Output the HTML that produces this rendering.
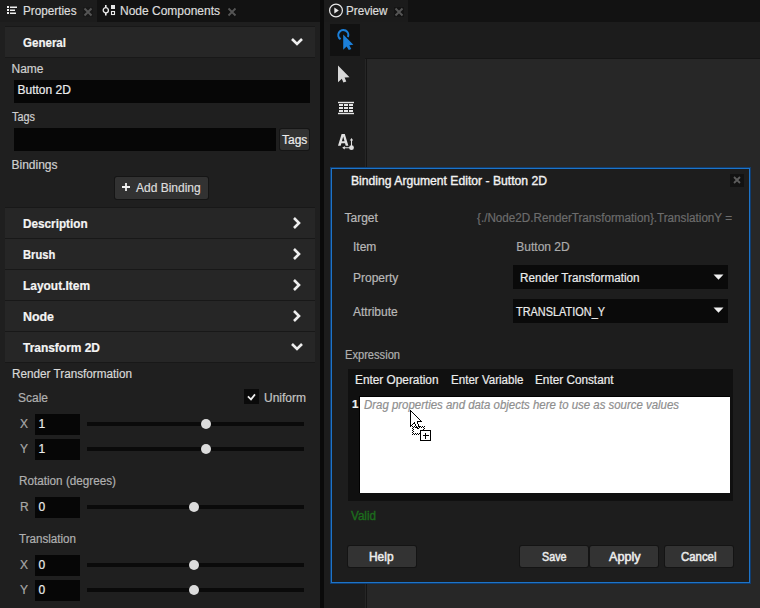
<!DOCTYPE html>
<html><head><meta charset="utf-8"><style>
html,body{margin:0;padding:0;width:760px;height:608px;overflow:hidden;background:#161616;}
body{position:relative;font-family:"Liberation Sans",sans-serif;}
body>div,body>svg{position:absolute;}
.t{white-space:nowrap;-webkit-text-stroke:0.2px currentColor;}
</style></head><body>
<div style="left:0px;top:0px;width:760px;height:22px;background:#121212;"></div>
<div style="left:0px;top:22px;width:320px;height:586px;background:#1f1f1f;"></div>
<div style="left:0px;top:0px;width:97px;height:22px;background:#1c1c1c;"></div>
<div style="left:320px;top:0px;width:4px;height:608px;background:#0a0a0a;"></div>
<div style="left:324px;top:22px;width:436px;height:586px;background:#1c1c1c;"></div>
<div style="left:324px;top:0px;width:84px;height:22px;background:#1b1b1b;"></div>
<div style="left:365px;top:58px;width:395px;height:550px;background:#151515;"></div>
<div style="left:365px;top:59px;width:1px;height:549px;background:#262626;"></div>
<div style="left:367px;top:59px;width:393px;height:549px;background:#272727;"></div>
<svg style="left:7px;top:6px" width="11" height="9"><g fill="#f0f0f0"><rect x="0" y="0" width="2" height="2"/><rect x="0" y="3" width="2" height="2"/><rect x="0" y="6" width="2" height="2"/><rect x="3" y="0.5" width="7" height="1.5"/><rect x="3" y="3.5" width="5" height="1.5"/><rect x="3" y="6.5" width="6" height="1.5"/></g></svg>
<div class="t" style="left:22.5px;top:5.00px;font-size:12px;line-height:12px;color:#dcdcdc;transform:scaleX(0.9782);transform-origin:0 0;">Properties</div>
<svg style="left:83px;top:7px" width="10" height="10"><rect width="10" height="10" fill="#181818"/><path d="M1.5 1.5L8.5 8.5M8.5 1.5L1.5 8.5" stroke="#555555" stroke-width="1.9"/></svg>
<svg style="left:102px;top:4px" width="15" height="13"><circle cx="3.8" cy="6.2" r="2.6" fill="none" stroke="#ececec" stroke-width="1.3"/><path d="M3.8 1V3.6M3.8 8.8V11.5" stroke="#ececec" stroke-width="1.6"/><rect x="9" y="1" width="4" height="4" fill="#e4e4e4"/><rect x="9.5" y="7.5" width="3" height="3" fill="none" stroke="#ececec" stroke-width="1.1"/></svg>
<div class="t" style="left:119.5px;top:5.00px;font-size:12px;line-height:12px;color:#dcdcdc;transform:scaleX(0.9994);transform-origin:0 0;">Node Components</div>
<svg style="left:227px;top:7px" width="10" height="10"><rect width="10" height="10" fill="#111111"/><path d="M1.5 1.5L8.5 8.5M8.5 1.5L1.5 8.5" stroke="#555555" stroke-width="1.9"/></svg>
<svg style="left:328px;top:2px" width="16" height="16"><circle cx="8" cy="8.5" r="6.4" fill="none" stroke="#e8e8e8" stroke-width="1.2"/><path d="M6.3 5.6L10.8 8.5L6.3 11.4Z" fill="#e8e8e8"/></svg>
<div class="t" style="left:345.5px;top:5.00px;font-size:12px;line-height:12px;color:#dcdcdc;transform:scaleX(0.9724);transform-origin:0 0;">Preview</div>
<svg style="left:394px;top:7px" width="10" height="10"><rect width="10" height="10" fill="#141414"/><path d="M1.5 1.5L8.5 8.5M8.5 1.5L1.5 8.5" stroke="#555555" stroke-width="1.9"/></svg>
<div style="left:5px;top:26px;width:310px;height:32px;background:#181818;"></div>
<div style="left:5px;top:27px;width:310px;height:30px;background:#262626;"></div>
<div class="t" style="left:23px;top:37.00px;font-size:12px;line-height:12px;color:#f4f4f4;font-weight:bold;transform:scaleX(0.9622);transform-origin:0 0;">General</div>
<svg style="left:290px;top:36px" width="14" height="12"><path d="M2 3L7 8L12 3" fill="none" stroke="#eeeeee" stroke-width="2.6"/></svg>
<div class="t" style="left:11.5px;top:63.00px;font-size:12px;line-height:12px;color:#cfcfcf;">Name</div>
<div style="left:14px;top:80px;width:296px;height:23px;background:#060606;"></div>
<div class="t" style="left:17.5px;top:84.00px;font-size:12px;line-height:12px;color:#ececec;">Button 2D</div>
<div class="t" style="left:11.5px;top:111.00px;font-size:12px;line-height:12px;color:#cfcfcf;transform:scaleX(0.9074);transform-origin:0 0;">Tags</div>
<div style="left:14px;top:128px;width:262px;height:23px;background:#060606;"></div>
<div style="left:280px;top:129px;width:29px;height:21px;background:#323232;border-radius:2px;box-shadow:0 0 0 1px #151515;"></div>
<div class="t" style="left:282px;top:134.00px;font-size:12px;line-height:12px;color:#ececec;">Tags</div>
<div class="t" style="left:11.5px;top:159.00px;font-size:12px;line-height:12px;color:#cfcfcf;">Bindings</div>
<div style="left:115px;top:177px;width:93px;height:22px;background:#323232;border-radius:2px;box-shadow:0 0 0 1px #151515;"></div>
<svg style="left:121px;top:182px" width="10" height="10"><path d="M5 1V9M1 5H9" stroke="#f0f0f0" stroke-width="1.8"/></svg>
<div class="t" style="left:136px;top:182.00px;font-size:12px;line-height:12px;color:#dddddd;">Add Binding</div>
<div style="left:5px;top:207px;width:310px;height:32px;background:#181818;"></div>
<div style="left:5px;top:208px;width:310px;height:30px;background:#262626;"></div>
<div class="t" style="left:23px;top:218.00px;font-size:12px;line-height:12px;color:#f4f4f4;font-weight:bold;transform:scaleX(0.9786);transform-origin:0 0;">Description</div>
<svg style="left:291px;top:216px" width="12" height="14"><path d="M3 2L8 7L3 12" fill="none" stroke="#eeeeee" stroke-width="2.6"/></svg>
<div style="left:5px;top:238px;width:310px;height:32px;background:#181818;"></div>
<div style="left:5px;top:239px;width:310px;height:30px;background:#262626;"></div>
<div class="t" style="left:23px;top:249.00px;font-size:12px;line-height:12px;color:#f4f4f4;font-weight:bold;transform:scaleX(0.9288);transform-origin:0 0;">Brush</div>
<svg style="left:291px;top:247px" width="12" height="14"><path d="M3 2L8 7L3 12" fill="none" stroke="#eeeeee" stroke-width="2.6"/></svg>
<div style="left:5px;top:269px;width:310px;height:32px;background:#181818;"></div>
<div style="left:5px;top:270px;width:310px;height:30px;background:#262626;"></div>
<div class="t" style="left:23px;top:280.00px;font-size:12px;line-height:12px;color:#f4f4f4;font-weight:bold;transform:scaleX(0.9949);transform-origin:0 0;">Layout.Item</div>
<svg style="left:291px;top:278px" width="12" height="14"><path d="M3 2L8 7L3 12" fill="none" stroke="#eeeeee" stroke-width="2.6"/></svg>
<div style="left:5px;top:300px;width:310px;height:32px;background:#181818;"></div>
<div style="left:5px;top:301px;width:310px;height:30px;background:#262626;"></div>
<div class="t" style="left:23px;top:311.00px;font-size:12px;line-height:12px;color:#f4f4f4;font-weight:bold;transform:scaleX(1.0334);transform-origin:0 0;">Node</div>
<svg style="left:291px;top:309px" width="12" height="14"><path d="M3 2L8 7L3 12" fill="none" stroke="#eeeeee" stroke-width="2.6"/></svg>
<div style="left:5px;top:331px;width:310px;height:32px;background:#181818;"></div>
<div style="left:5px;top:332px;width:310px;height:30px;background:#262626;"></div>
<div class="t" style="left:23px;top:342.00px;font-size:12px;line-height:12px;color:#f4f4f4;font-weight:bold;transform:scaleX(0.9954);transform-origin:0 0;">Transform 2D</div>
<svg style="left:290px;top:341px" width="14" height="12"><path d="M2 3L7 8L12 3" fill="none" stroke="#eeeeee" stroke-width="2.6"/></svg>
<div class="t" style="left:11.5px;top:368.00px;font-size:12px;line-height:12px;color:#d8d8d8;transform:scaleX(0.9778);transform-origin:0 0;">Render Transformation</div>
<div class="t" style="left:18px;top:392.00px;font-size:12px;line-height:12px;color:#b0b0b0;">Scale</div>
<div style="left:244px;top:389px;width:15px;height:15px;background:#0a0a0a;"></div>
<svg style="left:244px;top:389px" width="15" height="15"><path d="M3.9 7.4L7 10.4L11 5.4" fill="none" stroke="#eeeeee" stroke-width="1.7"/></svg>
<div class="t" style="left:264px;top:392.00px;font-size:12px;line-height:12px;color:#c4c4c4;">Uniform</div>
<div class="t" style="left:20px;top:418.00px;font-size:12px;line-height:12px;color:#a8a8a8;">X</div>
<div style="left:35px;top:414px;width:45px;height:21px;background:#060606;"></div>
<div class="t" style="left:38.5px;top:418.00px;font-size:12px;line-height:12px;color:#ececec;">1</div>
<div style="left:87px;top:422px;width:217px;height:4px;background:#0a0a0a;"></div>
<div style="left:200.5px;top:419px;width:10px;height:10px;border-radius:50%;background:#dcdcdc"></div>
<div class="t" style="left:20px;top:443.00px;font-size:12px;line-height:12px;color:#a8a8a8;">Y</div>
<div style="left:35px;top:439px;width:45px;height:21px;background:#060606;"></div>
<div class="t" style="left:38.5px;top:443.00px;font-size:12px;line-height:12px;color:#ececec;">1</div>
<div style="left:87px;top:447px;width:217px;height:4px;background:#0a0a0a;"></div>
<div style="left:200.5px;top:444px;width:10px;height:10px;border-radius:50%;background:#dcdcdc"></div>
<div class="t" style="left:18.5px;top:475.00px;font-size:12px;line-height:12px;color:#b0b0b0;transform:scaleX(0.9760);transform-origin:0 0;">Rotation (degrees)</div>
<div class="t" style="left:20px;top:501.00px;font-size:12px;line-height:12px;color:#a8a8a8;">R</div>
<div style="left:35px;top:497px;width:45px;height:21px;background:#060606;"></div>
<div class="t" style="left:38.5px;top:501.00px;font-size:12px;line-height:12px;color:#ececec;">0</div>
<div style="left:87px;top:505px;width:217px;height:4px;background:#0a0a0a;"></div>
<div style="left:189px;top:502px;width:10px;height:10px;border-radius:50%;background:#dcdcdc"></div>
<div class="t" style="left:18.5px;top:533.00px;font-size:12px;line-height:12px;color:#b0b0b0;transform:scaleX(0.9675);transform-origin:0 0;">Translation</div>
<div class="t" style="left:20px;top:559.00px;font-size:12px;line-height:12px;color:#a8a8a8;">X</div>
<div style="left:35px;top:555px;width:45px;height:21px;background:#060606;"></div>
<div class="t" style="left:38.5px;top:559.00px;font-size:12px;line-height:12px;color:#ececec;">0</div>
<div style="left:87px;top:563px;width:217px;height:4px;background:#0a0a0a;"></div>
<div style="left:189px;top:560px;width:10px;height:10px;border-radius:50%;background:#dcdcdc"></div>
<div class="t" style="left:20px;top:584.00px;font-size:12px;line-height:12px;color:#a8a8a8;">Y</div>
<div style="left:35px;top:580px;width:45px;height:21px;background:#060606;"></div>
<div class="t" style="left:38.5px;top:584.00px;font-size:12px;line-height:12px;color:#ececec;">0</div>
<div style="left:87px;top:588px;width:217px;height:4px;background:#0a0a0a;"></div>
<div style="left:189px;top:585px;width:10px;height:10px;border-radius:50%;background:#dcdcdc"></div>
<div style="left:330px;top:24px;width:30px;height:32px;background:#111111;"></div>
<svg style="left:0px;top:0px" width="760" height="160"><path d="M340.6 39.2A5 5 0 1 1 347.9 37" fill="none" stroke="#1b7fd9" stroke-width="2.1"/><path d="M343.2 34.5L353.4 44.8L349.3 45.2L351.3 49L348.8 50L346.6 46.4L343.2 49.7Z" fill="#1b7fd9" stroke="#111" stroke-width="0.8" paint-order="stroke"/><path d="M338 65.6L349.5 77.2L344.6 77.6L346.3 81.6L343.4 82.6L341.8 78.8L338 82.2Z" fill="#d8d8d8"/><g fill="#e6e6e6"><rect x="338" y="101.8" width="16" height="1.4"/><rect x="338" y="112.8" width="16" height="1.4"/><rect x="339" y="104" width="4" height="2"/><rect x="344" y="104" width="4" height="2"/><rect x="349" y="104" width="4" height="2"/><rect x="339" y="107" width="4" height="2"/><rect x="344" y="107" width="4" height="2"/><rect x="349" y="107" width="4" height="2"/><rect x="339" y="110" width="4" height="2"/><rect x="344" y="110" width="4" height="2"/><rect x="349" y="110" width="4" height="2"/></g><path fill="#e0e0e0" fill-rule="evenodd" d="M338 145.7L341.6 134L344.8 134L348.4 145.7L345.7 145.7L345 143.3L341.4 143.3L340.7 145.7Z M341.9 141.2L344.5 141.2L343.2 136.6Z"/><path d="M351.5 147V140M343.5 147.7H351" stroke="#e0e0e0" stroke-width="1.1" fill="none"/><path d="M349.8 140.6L351.5 138L353.2 140.6Z M342.2 147.7L344.8 146L344.8 149.4Z" fill="#e0e0e0"/><circle cx="351.5" cy="147.7" r="2.4" fill="#e0e0e0"/></svg>
<div style="left:331px;top:168px;width:419px;height:415px;background:#1d1d1d;box-sizing:border-box;border:1px solid #1e74c8;box-shadow:0 0 0 1px #0f3d70;"></div>
<div class="t" style="left:350.5px;top:175.00px;font-size:12px;line-height:12px;color:#f2f2f2;transform:scaleX(1.0132);transform-origin:0 0;-webkit-text-stroke:0.35px #f2f2f2;">Binding Argument Editor - Button 2D</div>
<div style="left:730px;top:174px;width:14px;height:13px;background:#121212;"></div>
<svg style="left:732px;top:175px" width="10" height="10"><path d="M2 2L8 8M8 2L2 8" stroke="#5c5c5c" stroke-width="1.8"/></svg>
<div class="t" style="left:344.5px;top:212.00px;font-size:12px;line-height:12px;color:#b8b8b8;">Target</div>
<div class="t" style="left:477px;top:212.00px;font-size:12px;line-height:12px;color:#6c6c6c;transform:scaleX(0.9732);transform-origin:0 0;">{./Node2D.RenderTransformation}.TranslationY =</div>
<div class="t" style="left:353px;top:241.00px;font-size:12px;line-height:12px;color:#b8b8b8;">Item</div>
<div class="t" style="left:516.3px;top:241.00px;font-size:12px;line-height:12px;color:#ababab;">Button 2D</div>
<div class="t" style="left:353px;top:272.00px;font-size:12px;line-height:12px;color:#b8b8b8;">Property</div>
<div style="left:513px;top:265px;width:215px;height:24px;background:#0a0a0a;"></div>
<div class="t" style="left:519.5px;top:272.00px;font-size:12px;line-height:12px;color:#ececec;transform:scaleX(0.9737);transform-origin:0 0;">Render Transformation</div>
<svg style="left:713px;top:274px" width="12" height="7"><path d="M0.5 0.5H10.5L5.5 5.8Z" fill="#f0f0f0"/></svg>
<div class="t" style="left:353px;top:306.00px;font-size:12px;line-height:12px;color:#b8b8b8;">Attribute</div>
<div style="left:513px;top:299px;width:215px;height:24px;background:#0a0a0a;"></div>
<div class="t" style="left:516.4px;top:306.00px;font-size:12px;line-height:12px;color:#ececec;transform:scaleX(0.9100);transform-origin:0 0;">TRANSLATION_Y</div>
<svg style="left:713px;top:307px" width="12" height="7"><path d="M0.5 0.5H10.5L5.5 5.8Z" fill="#f0f0f0"/></svg>
<div class="t" style="left:344.6px;top:349.00px;font-size:12px;line-height:12px;color:#b0b0b0;transform:scaleX(0.9265);transform-origin:0 0;">Expression</div>
<div style="left:348px;top:369px;width:385px;height:132px;background:#101010;"></div>
<div class="t" style="left:354.5px;top:374.00px;font-size:12px;line-height:12px;color:#ececec;transform:scaleX(0.9857);transform-origin:0 0;">Enter Operation</div>
<div class="t" style="left:450.5px;top:374.00px;font-size:12px;line-height:12px;color:#ececec;transform:scaleX(0.9647);transform-origin:0 0;">Enter Variable</div>
<div class="t" style="left:535px;top:374.00px;font-size:12px;line-height:12px;color:#ececec;transform:scaleX(0.9807);transform-origin:0 0;">Enter Constant</div>
<div style="left:359px;top:396px;width:371px;height:97px;background:#000000;"></div>
<div style="left:360px;top:397px;width:370px;height:96px;background:#ffffff;"></div>
<div class="t" style="left:352px;top:399.00px;font-size:11.5px;line-height:11.5px;color:#f0f0f0;font-weight:bold;">1</div>
<div class="t" style="left:363.5px;top:399.00px;font-size:12px;line-height:12px;color:#8e8e8e;font-style:italic;transform:scaleX(0.9521);transform-origin:0 0;">Drag properties and data objects here to use as source values</div>
<svg style="left:410px;top:410px" width="24" height="34" shape-rendering="crispEdges"><rect x="0" y="0" width="1" height="1" fill="#000"/><rect x="0" y="1" width="1" height="1" fill="#000"/><rect x="1" y="1" width="1" height="1" fill="#000"/><rect x="0" y="2" width="1" height="1" fill="#000"/><rect x="1" y="2" width="1" height="1" fill="#fff"/><rect x="2" y="2" width="1" height="1" fill="#000"/><rect x="0" y="3" width="1" height="1" fill="#000"/><rect x="1" y="3" width="1" height="1" fill="#fff"/><rect x="2" y="3" width="1" height="1" fill="#fff"/><rect x="3" y="3" width="1" height="1" fill="#000"/><rect x="0" y="4" width="1" height="1" fill="#000"/><rect x="1" y="4" width="1" height="1" fill="#fff"/><rect x="2" y="4" width="1" height="1" fill="#fff"/><rect x="3" y="4" width="1" height="1" fill="#fff"/><rect x="4" y="4" width="1" height="1" fill="#000"/><rect x="0" y="5" width="1" height="1" fill="#000"/><rect x="1" y="5" width="1" height="1" fill="#fff"/><rect x="2" y="5" width="1" height="1" fill="#fff"/><rect x="3" y="5" width="1" height="1" fill="#fff"/><rect x="4" y="5" width="1" height="1" fill="#fff"/><rect x="5" y="5" width="1" height="1" fill="#000"/><rect x="0" y="6" width="1" height="1" fill="#000"/><rect x="1" y="6" width="1" height="1" fill="#fff"/><rect x="2" y="6" width="1" height="1" fill="#fff"/><rect x="3" y="6" width="1" height="1" fill="#fff"/><rect x="4" y="6" width="1" height="1" fill="#fff"/><rect x="5" y="6" width="1" height="1" fill="#fff"/><rect x="6" y="6" width="1" height="1" fill="#000"/><rect x="0" y="7" width="1" height="1" fill="#000"/><rect x="1" y="7" width="1" height="1" fill="#fff"/><rect x="2" y="7" width="1" height="1" fill="#fff"/><rect x="3" y="7" width="1" height="1" fill="#fff"/><rect x="4" y="7" width="1" height="1" fill="#fff"/><rect x="5" y="7" width="1" height="1" fill="#fff"/><rect x="6" y="7" width="1" height="1" fill="#fff"/><rect x="7" y="7" width="1" height="1" fill="#000"/><rect x="0" y="8" width="1" height="1" fill="#000"/><rect x="1" y="8" width="1" height="1" fill="#fff"/><rect x="2" y="8" width="1" height="1" fill="#fff"/><rect x="3" y="8" width="1" height="1" fill="#fff"/><rect x="4" y="8" width="1" height="1" fill="#fff"/><rect x="5" y="8" width="1" height="1" fill="#fff"/><rect x="6" y="8" width="1" height="1" fill="#fff"/><rect x="7" y="8" width="1" height="1" fill="#fff"/><rect x="8" y="8" width="1" height="1" fill="#000"/><rect x="0" y="9" width="1" height="1" fill="#000"/><rect x="1" y="9" width="1" height="1" fill="#fff"/><rect x="2" y="9" width="1" height="1" fill="#fff"/><rect x="3" y="9" width="1" height="1" fill="#fff"/><rect x="4" y="9" width="1" height="1" fill="#fff"/><rect x="5" y="9" width="1" height="1" fill="#fff"/><rect x="6" y="9" width="1" height="1" fill="#fff"/><rect x="7" y="9" width="1" height="1" fill="#fff"/><rect x="8" y="9" width="1" height="1" fill="#fff"/><rect x="9" y="9" width="1" height="1" fill="#000"/><rect x="0" y="10" width="1" height="1" fill="#000"/><rect x="1" y="10" width="1" height="1" fill="#fff"/><rect x="2" y="10" width="1" height="1" fill="#fff"/><rect x="3" y="10" width="1" height="1" fill="#fff"/><rect x="4" y="10" width="1" height="1" fill="#fff"/><rect x="5" y="10" width="1" height="1" fill="#fff"/><rect x="6" y="10" width="1" height="1" fill="#fff"/><rect x="7" y="10" width="1" height="1" fill="#fff"/><rect x="8" y="10" width="1" height="1" fill="#fff"/><rect x="9" y="10" width="1" height="1" fill="#fff"/><rect x="10" y="10" width="1" height="1" fill="#000"/><rect x="0" y="11" width="1" height="1" fill="#000"/><rect x="1" y="11" width="1" height="1" fill="#fff"/><rect x="2" y="11" width="1" height="1" fill="#fff"/><rect x="3" y="11" width="1" height="1" fill="#fff"/><rect x="4" y="11" width="1" height="1" fill="#fff"/><rect x="5" y="11" width="1" height="1" fill="#fff"/><rect x="6" y="11" width="1" height="1" fill="#fff"/><rect x="7" y="11" width="1" height="1" fill="#000"/><rect x="8" y="11" width="1" height="1" fill="#000"/><rect x="9" y="11" width="1" height="1" fill="#000"/><rect x="10" y="11" width="1" height="1" fill="#000"/><rect x="11" y="11" width="1" height="1" fill="#000"/><rect x="0" y="12" width="1" height="1" fill="#000"/><rect x="1" y="12" width="1" height="1" fill="#fff"/><rect x="2" y="12" width="1" height="1" fill="#fff"/><rect x="3" y="12" width="1" height="1" fill="#fff"/><rect x="4" y="12" width="1" height="1" fill="#000"/><rect x="5" y="12" width="1" height="1" fill="#fff"/><rect x="6" y="12" width="1" height="1" fill="#fff"/><rect x="7" y="12" width="1" height="1" fill="#000"/><rect x="0" y="13" width="1" height="1" fill="#000"/><rect x="1" y="13" width="1" height="1" fill="#fff"/><rect x="2" y="13" width="1" height="1" fill="#fff"/><rect x="3" y="13" width="1" height="1" fill="#000"/><rect x="4" y="13" width="1" height="1" fill="#000"/><rect x="5" y="13" width="1" height="1" fill="#fff"/><rect x="6" y="13" width="1" height="1" fill="#fff"/><rect x="7" y="13" width="1" height="1" fill="#000"/><rect x="0" y="14" width="1" height="1" fill="#000"/><rect x="1" y="14" width="1" height="1" fill="#fff"/><rect x="2" y="14" width="1" height="1" fill="#000"/><rect x="5" y="14" width="1" height="1" fill="#000"/><rect x="6" y="14" width="1" height="1" fill="#fff"/><rect x="7" y="14" width="1" height="1" fill="#fff"/><rect x="8" y="14" width="1" height="1" fill="#000"/><rect x="0" y="15" width="1" height="1" fill="#000"/><rect x="1" y="15" width="1" height="1" fill="#000"/><rect x="5" y="15" width="1" height="1" fill="#000"/><rect x="6" y="15" width="1" height="1" fill="#fff"/><rect x="7" y="15" width="1" height="1" fill="#fff"/><rect x="8" y="15" width="1" height="1" fill="#000"/><rect x="0" y="16" width="1" height="1" fill="#000"/><rect x="6" y="16" width="1" height="1" fill="#000"/><rect x="7" y="16" width="1" height="1" fill="#fff"/><rect x="8" y="16" width="1" height="1" fill="#fff"/><rect x="9" y="16" width="1" height="1" fill="#000"/><rect x="6" y="17" width="1" height="1" fill="#000"/><rect x="7" y="17" width="1" height="1" fill="#fff"/><rect x="8" y="17" width="1" height="1" fill="#fff"/><rect x="9" y="17" width="1" height="1" fill="#000"/><rect x="7" y="18" width="1" height="1" fill="#000"/><rect x="8" y="18" width="1" height="1" fill="#000"/><rect x="2" y="16" width="1" height="1" fill="#000"/><rect x="2" y="18" width="1" height="1" fill="#000"/><rect x="2" y="20" width="1" height="1" fill="#000"/><rect x="2" y="22" width="1" height="1" fill="#000"/><rect x="2" y="24" width="1" height="1" fill="#000"/><rect x="3" y="17" width="1" height="1" fill="#000"/><rect x="3" y="19" width="1" height="1" fill="#000"/><rect x="3" y="21" width="1" height="1" fill="#000"/><rect x="3" y="23" width="1" height="1" fill="#000"/><rect x="4" y="16" width="1" height="1" fill="#000"/><rect x="4" y="24" width="1" height="1" fill="#000"/><rect x="5" y="17" width="1" height="1" fill="#000"/><rect x="5" y="23" width="1" height="1" fill="#000"/><rect x="6" y="16" width="1" height="1" fill="#000"/><rect x="6" y="24" width="1" height="1" fill="#000"/><rect x="7" y="17" width="1" height="1" fill="#000"/><rect x="7" y="23" width="1" height="1" fill="#000"/><rect x="8" y="16" width="1" height="1" fill="#000"/><rect x="8" y="24" width="1" height="1" fill="#000"/><rect x="9" y="17" width="1" height="1" fill="#000"/><rect x="9" y="23" width="1" height="1" fill="#000"/><rect x="10" y="16" width="1" height="1" fill="#000"/><rect x="10" y="24" width="1" height="1" fill="#000"/><rect x="11" y="17" width="1" height="1" fill="#000"/><rect x="11" y="23" width="1" height="1" fill="#000"/><rect x="12" y="16" width="1" height="1" fill="#000"/><rect x="12" y="24" width="1" height="1" fill="#000"/><rect x="13" y="17" width="1" height="1" fill="#000"/><rect x="13" y="19" width="1" height="1" fill="#000"/><rect x="13" y="21" width="1" height="1" fill="#000"/><rect x="13" y="23" width="1" height="1" fill="#000"/><rect x="14" y="16" width="1" height="1" fill="#000"/><rect x="14" y="18" width="1" height="1" fill="#000"/><rect x="14" y="20" width="1" height="1" fill="#000"/><rect x="14" y="22" width="1" height="1" fill="#000"/><rect x="14" y="24" width="1" height="1" fill="#000"/><rect x="10.5" y="20.5" width="10" height="10" fill="#fff" stroke="#000" stroke-width="1"/><path d="M15.5 22.5V28.5M12.5 25.5H18.5" stroke="#000" stroke-width="1"/></svg>
<div class="t" style="left:351.4px;top:510.00px;font-size:12px;line-height:12px;color:#1c6c1c;transform:scaleX(0.9693);transform-origin:0 0;-webkit-text-stroke:0.4px #1c6c1c;">Valid</div>
<div style="left:348px;top:546px;width:68px;height:21px;background:#333333;border-radius:2px;box-shadow:0 0 0 1px #141414;"></div>
<div class="t" style="left:369px;top:551.00px;font-size:12px;line-height:12px;color:#ececec;transform:scaleX(0.9928);transform-origin:0 0;-webkit-text-stroke:0.5px #ececec;">Help</div>
<div style="left:520px;top:546px;width:68px;height:21px;background:#333333;border-radius:2px;box-shadow:0 0 0 1px #141414;"></div>
<div class="t" style="left:541.5px;top:551.00px;font-size:12px;line-height:12px;color:#ececec;transform:scaleX(0.8957);transform-origin:0 0;-webkit-text-stroke:0.5px #ececec;">Save</div>
<div style="left:590px;top:546px;width:68px;height:21px;background:#333333;border-radius:2px;box-shadow:0 0 0 1px #141414;"></div>
<div class="t" style="left:608.5px;top:551.00px;font-size:12px;line-height:12px;color:#ececec;transform:scaleX(1.0494);transform-origin:0 0;-webkit-text-stroke:0.5px #ececec;">Apply</div>
<div style="left:665px;top:546px;width:68px;height:21px;background:#333333;border-radius:2px;box-shadow:0 0 0 1px #141414;"></div>
<div class="t" style="left:681px;top:551.00px;font-size:12px;line-height:12px;color:#ececec;transform:scaleX(0.9504);transform-origin:0 0;-webkit-text-stroke:0.5px #ececec;">Cancel</div>
</body></html>
